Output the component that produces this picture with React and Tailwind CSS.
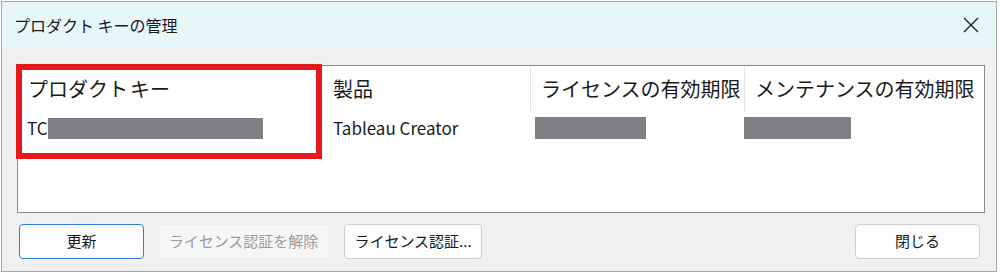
const font = { fontFamily: '"Noto Sans CJK JP", "Noto Sans", sans-serif' };

const columns = [
  { label: "プロダクト キー", width: "w-[305px]", sep: false },
  { label: "製品", width: "w-[207px]", sep: false },
  { label: "ライセンスの有効期限", width: "w-[214px]", sep: true },
  { label: "メンテナンスの有効期限", width: "flex-1", sep: true },
];

function Button({ children, variant = "normal", className = "" }) {
  const styles = {
    normal: "border border-[#cfcfcf] bg-[#fdfdfd] text-[#1a1a1a]",
    default: "border-[1.5px] border-[#2f7fd6] bg-[#fdfdfd] text-[#1a1a1a]",
    disabled: "border border-[#ececec] bg-[#f6f6f6] text-[#9b9b9b]",
  };
  return (
    <button
      className={`h-[35px] rounded-[4px] text-[15px] flex items-center justify-center ${styles[variant]} ${className}`}
    >
      {children}
    </button>
  );
}

export default function App() {
  return (
    <div className="w-[1000px] h-[280px] bg-white pt-[1px] pl-[1px]" style={font}>
      <div className="w-[996px] h-[271px] border border-[#a8a8a8] bg-[#f0f0f0] flex flex-col">
        {/* Title bar */}
        <div className="h-[45px] bg-[#e7f6f8] flex items-center justify-between pl-[12px] pr-[16px]">
          <span className="text-[16px] text-[#1a1a1a]">プロダクト キーの管理</span>
          <svg width="18" height="18" viewBox="0 0 18 18" className="text-[#222]">
            <path d="M2 2L16 16M16 2L2 16" stroke="currentColor" strokeWidth="1.4" />
          </svg>
        </div>

        <div className="flex flex-col px-[15px] pt-[18px]">
          {/* List box */}
          <div className="relative h-[148px] w-[968px] border border-[#8a8a8a] bg-white">
            <div className="flex h-[45px]">
              {columns.map((c, i) => (
                <div
                  key={i}
                  className={`${c.width} h-full flex items-center text-[20px] text-[#1a1a1a] pl-[10px] ${
                    c.sep ? "border-l border-[#e3e3e3]" : ""
                  }`}
                >
                  {i === 0 ? (
                    <span>
                      プロダクト<span className="ml-[2px]">キー</span>
                    </span>
                  ) : (
                    c.label
                  )}
                </div>
              ))}
            </div>
            <div className="flex h-[34px] items-center text-[17px] text-[#1a1a1a]">
              <div className="w-[305px] pl-[9px] flex items-center">
                <span>TC</span>
                <span className="w-[215px] h-[21px] bg-[#808084]" />
              </div>
              <div className="w-[207px] pl-[10px]">Tableau Creator</div>
              <div className="w-[214px] pl-[5px]">
                <div className="w-[111px] h-[22px] bg-[#808084]" />
              </div>
              <div className="flex-1">
                <div className="w-[107px] h-[22px] bg-[#808084]" />
              </div>
            </div>

            {/* Highlight annotation */}
            <div className="absolute left-[-2px] top-[-2px] w-[306px] h-[95px] border-[6px] border-[#e3191c] pointer-events-none" />
          </div>

          {/* Buttons */}
          <div className="flex items-center mt-[11px] pl-[2px]">
            <Button variant="default" className="w-[125px]">更新</Button>
            <Button variant="disabled" className="w-[171px] ml-[14px]">ライセンス認証を解除</Button>
            <Button className="w-[138px] ml-[15px]">ライセンス認証...</Button>
            <Button className="w-[125px] ml-auto mr-[1px]">閉じる</Button>
          </div>
        </div>
      </div>
    </div>
  );
}
